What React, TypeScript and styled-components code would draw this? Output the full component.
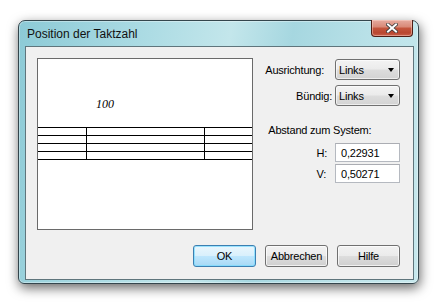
import React from "react";
import styled, { createGlobalStyle } from "styled-components";

const GlobalStyle = createGlobalStyle`
    html, body {
        margin: 0;
        padding: 0;
        background: #ffffff;
    }
    body {
        font-family: "Liberation Sans", Arial, sans-serif;
        font-size: 11px;
        letter-spacing: -0.2px;
        color: #000;
    }
`;

const Seite = styled.div`
    padding: 20px 0 0 18px;
    width: 439px;
    height: 305px;
    box-sizing: border-box;
`;

const Fenster = styled.div`
    width: 401px;
    height: 264px;
    box-sizing: border-box;
    border: 1px solid #34464d;
    border-radius: 7px 7px 6px 6px;
    padding: 0 4px 3px 6px;
    display: flex;
    flex-direction: column;
    background: linear-gradient(100deg, #8ccad6 0%, #addce4 30%, #c3e6eb 48%, #a6d7e0 62%, #bfe4ea 85%, #c7e8ed 100%);
    box-shadow: 0 0 0 1px rgba(255, 255, 255, 0.35) inset, 1px 4px 12px rgba(0, 0, 0, 0.6);
`;

const TitelLeiste = styled.div`
    height: 25px;
    display: flex;
    justify-content: space-between;
    align-items: center;
    padding-left: 2px;
`;

const TitelText = styled.span`
    font-size: 12px;
    letter-spacing: 0;
    color: #111;
    margin-top: 1px;
`;

const SchliessenKnopf = styled.div`
    align-self: flex-start;
    margin-top: -1px;
    margin-right: 1px;
    width: 42px;
    height: 17px;
    box-sizing: border-box;
    border: 1px solid #4f1d14;
    border-top: none;
    border-radius: 0 0 4px 4px;
    background: linear-gradient(#e6ab9f 0%, #d98a78 42%, #c4553c 52%, #b94730 80%, #c9604a 100%);
    box-shadow: inset 0 0 0 1px rgba(255, 220, 210, 0.45);
    display: flex;
    align-items: center;
    justify-content: center;
`;

const Inhalt = styled.div`
    flex: 1;
    border: 1px solid #5f757c;
    background: #f0f0f0;
    display: flex;
    flex-direction: column;
    padding: 11px 13px 12px 11px;
`;

const ObereZeile = styled.div`
    display: flex;
    justify-content: space-between;
    flex: 1;
`;

const Vorschau = styled.div`
    width: 216px;
    height: 172px;
    box-sizing: border-box;
    border: 1px solid #6a6a6a;
    background: #fff;
`;

const Taktzahl = styled.div`
    font-family: "Liberation Serif", "Times New Roman", serif;
    font-style: italic;
    font-size: 12px;
    letter-spacing: 0;
    line-height: 12px;
    color: #000;
    margin: 39px 0 0 58px;
    height: 12px;
`;

const Tabelle = styled.div`
    margin-top: 17px;
    border-top: 1px solid #000;
`;

const TabellenZeile = styled.div`
    display: flex;
    height: 8px;
    box-sizing: border-box;
    border-bottom: 1px solid #000;
`;

const TabellenZelle = styled.div<{ $breite?: number }>`
    box-sizing: border-box;
    ${(p) => (p.$breite ? `width: ${p.$breite}px; border-right: 1px solid #000;` : "flex: 1;")}
`;

const Einstellungen = styled.div`
    display: flex;
    flex-direction: column;
    align-items: stretch;
    margin-top: 1px;
`;

const Zeile = styled.div<{ $abstand?: number }>`
    display: flex;
    justify-content: flex-end;
    align-items: center;
    margin-top: ${(p) => p.$abstand ?? 0}px;
`;

const Beschriftung = styled.span<{ $luecke: number }>`
    margin-right: ${(p) => p.$luecke}px;
`;

const Auswahl = styled.div`
    width: 65px;
    height: 21px;
    box-sizing: border-box;
    border: 1px solid #707070;
    border-radius: 3px;
    background: linear-gradient(#f3f3f3 0%, #ebebeb 48%, #dddddd 52%, #d3d3d3 100%);
    box-shadow: inset 0 0 0 1px rgba(255, 255, 255, 0.6);
    display: flex;
    align-items: center;
    justify-content: space-between;
    padding: 0 5px 0 3px;
`;

const Pfeil = styled.span`
    width: 0;
    height: 0;
    border-left: 3.5px solid transparent;
    border-right: 3.5px solid transparent;
    border-top: 4px solid #000;
`;

const Abschnitt = styled.div`
    margin: 18px 0 0 3px;
`;

const Eingabe = styled.div`
    width: 65px;
    height: 19px;
    box-sizing: border-box;
    border: 1px solid #b5b9c0;
    border-top-color: #abadb3;
    background: #fff;
    display: flex;
    align-items: center;
    padding-left: 5px;
`;

const KnopfZeile = styled.div`
    display: flex;
    justify-content: flex-end;
    gap: 9px;
`;

const Knopf = styled.div<{ $standard?: boolean }>`
    width: 63px;
    height: 22px;
    box-sizing: border-box;
    border: 1px solid ${(p) => (p.$standard ? "#3c7fb1" : "#707070")};
    border-radius: 3px;
    background: ${(p) =>
        p.$standard
            ? "linear-gradient(#eaf6fd 0%, #d9f0fc 48%, #bee6fd 52%, #a7d9f5 100%)"
            : "linear-gradient(#f2f2f2 0%, #ebebeb 48%, #dddddd 52%, #cfcfcf 100%)"};
    box-shadow: inset 0 0 0 1px ${(p) => (p.$standard ? "rgba(120, 220, 255, 0.7)" : "rgba(255, 255, 255, 0.7)")};
    display: flex;
    align-items: center;
    justify-content: center;
`;

export default function App() {
    const zeilen = [0, 1, 2, 3];

    return (
        <>
            <GlobalStyle />
            <Seite>
                <Fenster>
                    <TitelLeiste>
                        <TitelText>Position der Taktzahl</TitelText>
                        <SchliessenKnopf>
                            <svg width="12" height="10" viewBox="0 0 12 10">
                                <path d="M2 1.5 L10 8.5 M10 1.5 L2 8.5" stroke="#3a3a3a" strokeWidth="3.6" strokeLinecap="square" />
                                <path d="M2 1.5 L10 8.5 M10 1.5 L2 8.5" stroke="#ffffff" strokeWidth="2" strokeLinecap="square" />
                            </svg>
                        </SchliessenKnopf>
                    </TitelLeiste>
                    <Inhalt>
                        <ObereZeile>
                            <Vorschau>
                                <Taktzahl>100</Taktzahl>
                                <Tabelle>
                                    {zeilen.map((z) => (
                                        <TabellenZeile key={z}>
                                            <TabellenZelle $breite={49} />
                                            <TabellenZelle $breite={118} />
                                            <TabellenZelle />
                                        </TabellenZeile>
                                    ))}
                                </Tabelle>
                            </Vorschau>
                            <Einstellungen>
                                <Zeile>
                                    <Beschriftung $luecke={11}>Ausrichtung:</Beschriftung>
                                    <Auswahl>
                                        <span>Links</span>
                                        <Pfeil />
                                    </Auswahl>
                                </Zeile>
                                <Zeile $abstand={5}>
                                    <Beschriftung $luecke={3}>Bündig:</Beschriftung>
                                    <Auswahl>
                                        <span>Links</span>
                                        <Pfeil />
                                    </Auswahl>
                                </Zeile>
                                <Abschnitt>Abstand zum System:</Abschnitt>
                                <Zeile $abstand={7}>
                                    <Beschriftung $luecke={8}>H:</Beschriftung>
                                    <Eingabe>0,22931</Eingabe>
                                </Zeile>
                                <Zeile $abstand={2}>
                                    <Beschriftung $luecke={9}>V:</Beschriftung>
                                    <Eingabe>0,50271</Eingabe>
                                </Zeile>
                            </Einstellungen>
                        </ObereZeile>
                        <KnopfZeile>
                            <Knopf $standard>OK</Knopf>
                            <Knopf>Abbrechen</Knopf>
                            <Knopf>Hilfe</Knopf>
                        </KnopfZeile>
                    </Inhalt>
                </Fenster>
            </Seite>
        </>
    );
}
